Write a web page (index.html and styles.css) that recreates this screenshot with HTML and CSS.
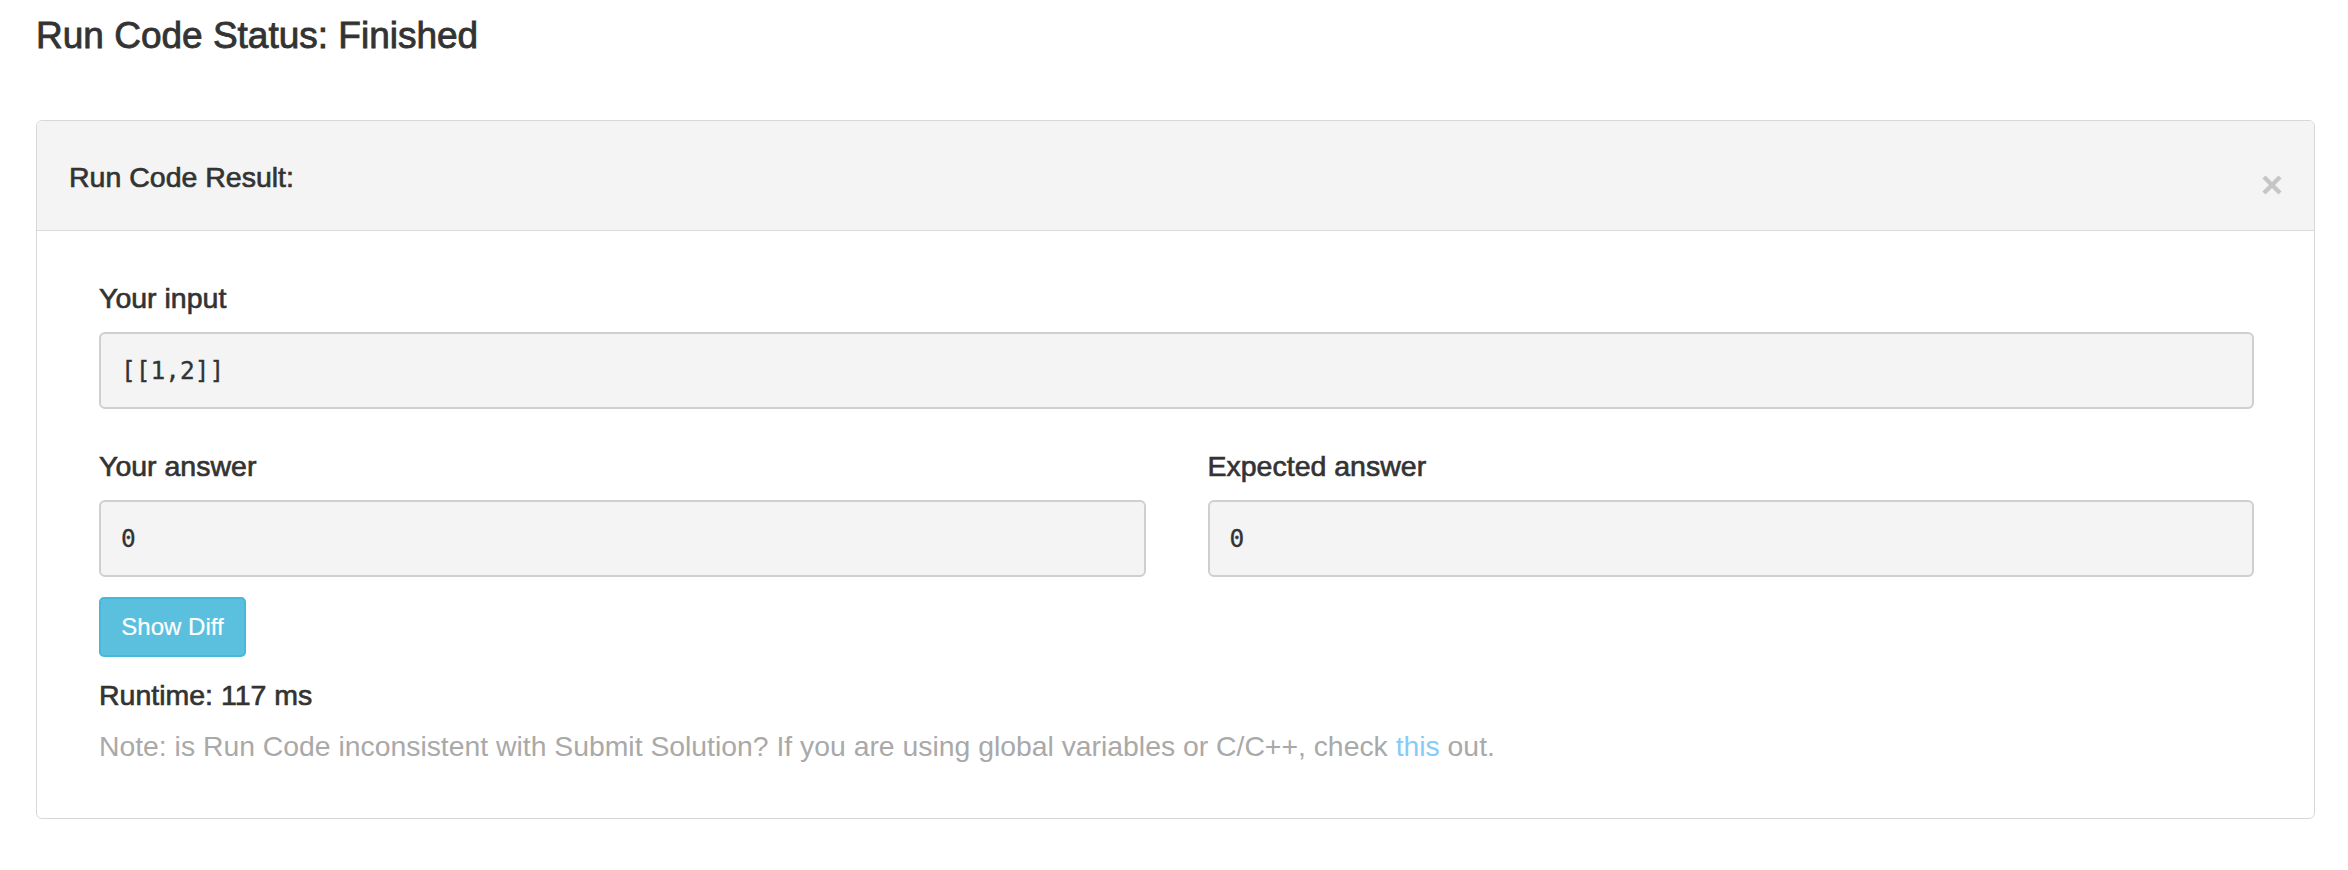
FILE: index.html
```html
<!DOCTYPE html>
<html lang="en">
<head>
<meta charset="utf-8">
<title>Run Code Status</title>
<link rel="stylesheet" href="styles.css">
</head>
<body>
  <h1 class="status-title">Run Code Status: Finished</h1>
  <div class="result-panel">
    <div class="panel-heading">
      <h3 class="panel-title">Run Code Result:</h3>
      <button class="close" aria-label="Close">
        <svg width="20" height="20" viewBox="0 0 20 20"><path d="M2 2 L18 18 M18 2 L2 18" stroke="#c6c6c6" stroke-width="4.4" fill="none"/></svg>
      </button>
    </div>
    <div class="panel-body">
      <div class="field">
        <div class="field-label">Your input</div>
        <div class="code-box">[[1,2]]</div>
      </div>
      <div class="answer-row">
        <div class="field">
          <div class="field-label">Your answer</div>
          <div class="code-box">0</div>
        </div>
        <div class="field">
          <div class="field-label">Expected answer</div>
          <div class="code-box">0</div>
        </div>
      </div>
      <button class="btn-diff">Show Diff</button>
      <div class="runtime">Runtime: 117 ms</div>
      <p class="note">Note: is Run Code inconsistent with Submit Solution? If you are using global variables or C/C++, check <a href="#" class="note-link">this</a> out.</p>
    </div>
  </div>
</body>
</html>
```

FILE: styles.css
```css
html, body {
  margin: 0;
  padding: 0;
  background: #ffffff;
}

body {
  font-family: "Liberation Sans", Arial, Helvetica, sans-serif;
  color: #333333;
  font-size: 28px;
}

.status-title {
  margin: 14px 0 0 36px;
  font-size: 37px;
  line-height: 44px;
  font-weight: 400;
  -webkit-text-stroke: 0.85px #333333;
}

.result-panel {
  margin: 62px 33px 0 36px;
  border: 1px solid #d8d8d8;
  border-radius: 6px;
  overflow: hidden;
}

.panel-heading {
  height: 110px;
  box-sizing: border-box;
  padding: 3px 32px 0 32px;
  background: #f4f4f4;
  border-bottom: 1px solid #dadada;
  display: flex;
  align-items: center;
  justify-content: space-between;
}

.panel-title {
  margin: 0;
  font-size: 28.5px;
  line-height: 34px;
  font-weight: 400;
  -webkit-text-stroke: 0.65px #333333;
}

.close {
  border: 0;
  background: transparent;
  padding: 0;
  margin-top: 16px;
  width: 20px;
  height: 20px;
  display: flex;
}

.panel-body {
  padding: 50px 60px 55px 62px;
}

.field-label {
  font-size: 28.5px;
  line-height: 34px;
  -webkit-text-stroke: 0.65px #333333;
  margin-bottom: 17px;
}

.code-box {
  height: 77px;
  box-sizing: border-box;
  border: 2px solid #cfcfcf;
  border-radius: 6px;
  background: #f4f4f4;
  display: flex;
  align-items: center;
  padding: 0 20px;
  font-family: "DejaVu Sans Mono", "Liberation Mono", monospace;
  font-size: 24.5px;
  color: #333333;
  -webkit-text-stroke: 0.3px #333333;
}

.answer-row {
  margin-top: 40px;
  display: grid;
  grid-template-columns: 1fr 1fr;
  column-gap: 62px;
}

.btn-diff {
  margin-top: 20px;
  height: 60px;
  width: 147px;
  box-sizing: border-box;
  border: 2px solid #46b8da;
  border-radius: 5px;
  background: #5bc0de;
  color: #ffffff;
  font-family: "Liberation Sans", Arial, Helvetica, sans-serif;
  font-size: 24px;
  padding: 0;
  display: block;
  -webkit-text-stroke: 0.2px #ffffff;
}

.runtime {
  margin-top: 21px;
  font-size: 28.5px;
  line-height: 34px;
  -webkit-text-stroke: 0.65px #333333;
}

.note {
  margin: 17px 0 0;
  font-size: 28.35px;
  line-height: 34px;
  color: #a9a9a9;
}

.note-link {
  color: #86cbf7;
  text-decoration: none;
}
```
